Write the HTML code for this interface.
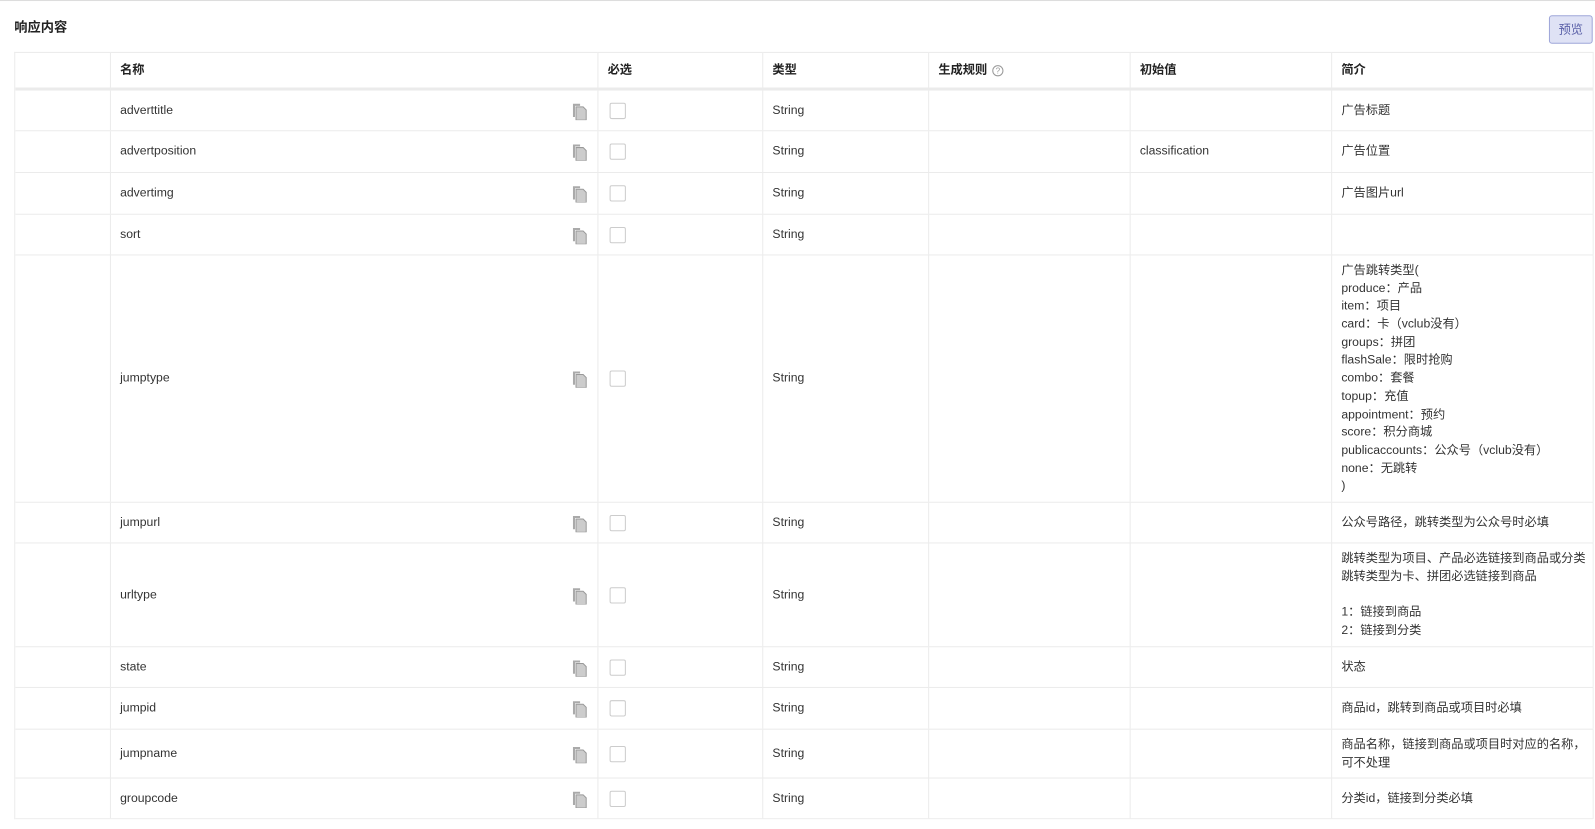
<!DOCTYPE html>
<html style="margin:0;padding:0;width:1595px;height:829px;overflow:hidden"><head><meta charset="utf-8"><style>
body{margin:0;background:#fff;font-family:"Liberation Sans","Noto Sans CJK SC",sans-serif;font-size:12px;color:#333;width:1595px;height:829px;overflow:hidden;position:relative}
#w{position:absolute;left:0;top:0;width:1595px;height:829px;transform:scale(1.0177);transform-origin:0 0}
.top{position:absolute;left:0;top:0;width:1595px;height:1px;background:#ddd}
.title{position:absolute;left:14px;top:16px;font-size:13px;font-weight:bold;color:#222}
.btn{position:absolute;left:1522px;top:15px;width:41px;height:26px;background:#dfe2f5;border:1px solid #9ea6d9;border-radius:3px;color:#5a60a8;font-size:12px;line-height:26px;text-align:center}
.tbl{position:absolute;left:14px;top:51px;width:1552px;border-left:1px solid #ebebeb;border-top:1px solid #ebebeb;box-sizing:border-box;overflow:hidden}
.r{display:flex;box-sizing:border-box;border-bottom:1px solid #ebebeb}
.r.h{border-bottom:3px solid #ebebeb;font-weight:bold;color:#222}
.c{box-sizing:border-box;border-right:1px solid #ebebeb;padding:0 9px;display:flex;align-items:center;position:relative;line-height:17.7px;white-space:nowrap;flex:none;min-width:0;overflow:hidden}
.c1{width:94px}.c2{width:479px}.c3{width:162px}.c4{width:163px}.c5{width:198px}.c6{width:198px}.c7{width:257px;padding-right:0}
.cp{position:absolute;right:10px;top:50%;margin-top:-8px;width:16px;height:17px}
.cb{display:inline-block;width:14px;height:14px;border:1px solid #ccc;border-radius:2px;margin-left:2px}
.q{display:inline-block;width:9px;height:9px;border:1px solid #999;border-radius:50%;font-size:8px;line-height:9px;text-align:center;color:#999;font-weight:normal;margin-left:5px}
</style></head><body><div id="w">
<div class="top"></div>
<div class="title">响应内容</div>
<div class="btn">预览</div>
<div class="tbl">
<div class="r h" style="height:37px"><div class="c c1"></div><div class="c c2">名称</div><div class="c c3">必选</div><div class="c c4">类型</div><div class="c c5">生成规则<span class="q">?</span></div><div class="c c6">初始值</div><div class="c c7">简介</div></div>
<div class="r" style="height:40px"><div class="c c1"></div><div class="c c2">adverttitle<svg class="cp" viewBox="0 0 16 17"><path d="M2 1h7v2H4v11H2z" fill="#aaa"/><path d="M5 4h7l3 3v10H5z" fill="#ccc" stroke="#999"/></svg></div><div class="c c3"><span class="cb"></span></div><div class="c c4">String</div><div class="c c5"></div><div class="c c6"></div><div class="c c7">广告标题</div></div>
<div class="r" style="height:41px"><div class="c c1"></div><div class="c c2">advertposition<svg class="cp" viewBox="0 0 16 17"><path d="M2 1h7v2H4v11H2z" fill="#aaa"/><path d="M5 4h7l3 3v10H5z" fill="#ccc" stroke="#999"/></svg></div><div class="c c3"><span class="cb"></span></div><div class="c c4">String</div><div class="c c5"></div><div class="c c6">classification</div><div class="c c7">广告位置</div></div>
<div class="r" style="height:41px"><div class="c c1"></div><div class="c c2">advertimg<svg class="cp" viewBox="0 0 16 17"><path d="M2 1h7v2H4v11H2z" fill="#aaa"/><path d="M5 4h7l3 3v10H5z" fill="#ccc" stroke="#999"/></svg></div><div class="c c3"><span class="cb"></span></div><div class="c c4">String</div><div class="c c5"></div><div class="c c6"></div><div class="c c7">广告图片url</div></div>
<div class="r" style="height:40px"><div class="c c1"></div><div class="c c2">sort<svg class="cp" viewBox="0 0 16 17"><path d="M2 1h7v2H4v11H2z" fill="#aaa"/><path d="M5 4h7l3 3v10H5z" fill="#ccc" stroke="#999"/></svg></div><div class="c c3"><span class="cb"></span></div><div class="c c4">String</div><div class="c c5"></div><div class="c c6"></div><div class="c c7"></div></div>
<div class="r" style="height:243px"><div class="c c1"></div><div class="c c2">jumptype<svg class="cp" viewBox="0 0 16 17"><path d="M2 1h7v2H4v11H2z" fill="#aaa"/><path d="M5 4h7l3 3v10H5z" fill="#ccc" stroke="#999"/></svg></div><div class="c c3"><span class="cb"></span></div><div class="c c4">String</div><div class="c c5"></div><div class="c c6"></div><div class="c c7"><div>广告跳转类型(<br>produce：产品<br>item：项目<br>card：卡（vclub没有）<br>groups：拼团<br>flashSale：限时抢购<br>combo：套餐<br>topup：充值<br>appointment：预约<br>score：积分商城<br>publicaccounts：公众号（vclub没有）<br>none：无跳转<br>)</div></div></div>
<div class="r" style="height:40px"><div class="c c1"></div><div class="c c2">jumpurl<svg class="cp" viewBox="0 0 16 17"><path d="M2 1h7v2H4v11H2z" fill="#aaa"/><path d="M5 4h7l3 3v10H5z" fill="#ccc" stroke="#999"/></svg></div><div class="c c3"><span class="cb"></span></div><div class="c c4">String</div><div class="c c5"></div><div class="c c6"></div><div class="c c7">公众号路径，跳转类型为公众号时必填</div></div>
<div class="r" style="height:102px"><div class="c c1"></div><div class="c c2">urltype<svg class="cp" viewBox="0 0 16 17"><path d="M2 1h7v2H4v11H2z" fill="#aaa"/><path d="M5 4h7l3 3v10H5z" fill="#ccc" stroke="#999"/></svg></div><div class="c c3"><span class="cb"></span></div><div class="c c4">String</div><div class="c c5"></div><div class="c c6"></div><div class="c c7"><div>跳转类型为项目、产品必选链接到商品或分类<br>跳转类型为卡、拼团必选链接到商品<br><br>1：链接到商品<br>2：链接到分类</div></div></div>
<div class="r" style="height:40px"><div class="c c1"></div><div class="c c2">state<svg class="cp" viewBox="0 0 16 17"><path d="M2 1h7v2H4v11H2z" fill="#aaa"/><path d="M5 4h7l3 3v10H5z" fill="#ccc" stroke="#999"/></svg></div><div class="c c3"><span class="cb"></span></div><div class="c c4">String</div><div class="c c5"></div><div class="c c6"></div><div class="c c7">状态</div></div>
<div class="r" style="height:41px"><div class="c c1"></div><div class="c c2">jumpid<svg class="cp" viewBox="0 0 16 17"><path d="M2 1h7v2H4v11H2z" fill="#aaa"/><path d="M5 4h7l3 3v10H5z" fill="#ccc" stroke="#999"/></svg></div><div class="c c3"><span class="cb"></span></div><div class="c c4">String</div><div class="c c5"></div><div class="c c6"></div><div class="c c7">商品id，跳转到商品或项目时必填</div></div>
<div class="r" style="height:48px"><div class="c c1"></div><div class="c c2">jumpname<svg class="cp" viewBox="0 0 16 17"><path d="M2 1h7v2H4v11H2z" fill="#aaa"/><path d="M5 4h7l3 3v10H5z" fill="#ccc" stroke="#999"/></svg></div><div class="c c3"><span class="cb"></span></div><div class="c c4">String</div><div class="c c5"></div><div class="c c6"></div><div class="c c7"><div>商品名称，链接到商品或项目时对应的名称，<br>可不处理</div></div></div>
<div class="r" style="height:40px"><div class="c c1"></div><div class="c c2">groupcode<svg class="cp" viewBox="0 0 16 17"><path d="M2 1h7v2H4v11H2z" fill="#aaa"/><path d="M5 4h7l3 3v10H5z" fill="#ccc" stroke="#999"/></svg></div><div class="c c3"><span class="cb"></span></div><div class="c c4">String</div><div class="c c5"></div><div class="c c6"></div><div class="c c7">分类id，链接到分类必填</div></div>
</div>
</div></body></html>
